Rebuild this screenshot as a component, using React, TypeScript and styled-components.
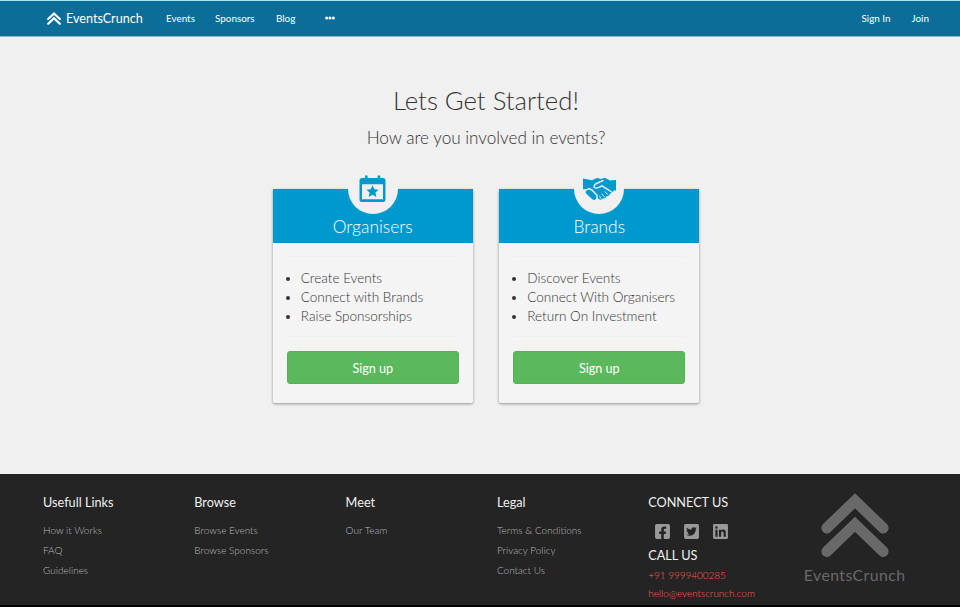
import React from 'react';
import styled, { createGlobalStyle } from 'styled-components';
import { FaFacebookSquare, FaTwitterSquare, FaLinkedin } from 'react-icons/fa';

const Global = createGlobalStyle`
  * { box-sizing: border-box; }
  body { margin: 0; background: #f0f0f0; font-family: Lato, "Liberation Sans", sans-serif; font-weight: 300; overflow: hidden; }
  h1, h2, h3, h4, p, ul { margin: 0; padding: 0; font-weight: inherit; }
  a { color: inherit; text-decoration: none; }
`;

const Page = styled.div`
  width: 960px;
  height: 607px;
  display: flex;
  flex-direction: column;
`;

const NavBar = styled.nav`
  height: 37px;
  flex: none;
  display: flex;
  align-items: center;
  padding: 0 31px 1px 47px;
  background: #0b6d98;
  border-top: 1px solid #a5e6f5;
  border-bottom: 1px solid #8fb9cb;
  color: #fff;
  font-size: 9.9px;
  font-weight: 400;
  white-space: nowrap;
`;

const Brand = styled.a`
  display: flex;
  align-items: center;
  gap: 5px;
  width: 119px;
  font-size: 12.6px;
  line-height: 17px;
  padding-top: 1px;
`;

const NavLink = styled.a<{ $width?: number }>`
  width: ${({ $width }) => ($width ? `${$width}px` : 'auto')};
  line-height: 14px;
`;

const Spacer = styled.div`
  flex: 1;
`;

const Main = styled.main`
  height: 437px;
  flex: none;
  display: flex;
  flex-direction: column;
  align-items: center;
  padding: 46px 0 0 12px;
`;

const Title = styled.h1`
  font-size: 25.7px;
  line-height: 34px;
  color: #333;
`;

const Subtitle = styled.h2`
  margin-top: 10px;
  font-size: 17.15px;
  line-height: 22px;
  color: #333;
`;

const Cards = styled.div`
  display: flex;
  gap: 26.5px;
  margin-top: 40px;
`;

const Card = styled.section`
  width: 200px;
  height: 214px;
  background: #f4f4f4;
  border-radius: 2px;
  box-shadow: 0 1px 3px rgba(0, 0, 0, 0.4);
`;

const CardHead = styled.header`
  height: 54px;
  display: flex;
  flex-direction: column;
  align-items: center;
  background: #0099cd;
  color: #fff;
`;

const Disc = styled.div`
  flex: none;
  width: 50px;
  height: 50px;
  margin-top: -25px;
  border-radius: 50%;
  display: flex;
  align-items: center;
  justify-content: center;
  background: #f0f0f0;
`;

const CardTitle = styled.h3`
  margin-top: 2px;
  font-size: 17.4px;
  line-height: 22px;
  font-weight: 300;
`;

const CardBody = styled.div`
  padding: 13px 14px;
`;

const Perks = styled.ul`
  height: 81px;
  padding: 12px 0 0 14px;
  border-top: 1px solid #efefef;
  border-bottom: 1px solid #efefef;
  font-size: 13.55px;
  line-height: 19.2px;
  color: #333;
  white-space: nowrap;
`;

const SignUp = styled.button`
  display: block;
  width: 172px;
  height: 33px;
  margin-top: 14px;
  padding: 2px 0 0;
  border: 1px solid #54b254;
  border-radius: 3px;
  background: #5cb85c;
  color: #fff;
  font: 400 12.6px/29px Lato, sans-serif;
`;

const Footer = styled.footer`
  height: 133px;
  flex: none;
  display: grid;
  grid-template-columns: 151.3px 151.3px 151.3px 151.3px 150px 1fr;
  padding: 18px 0 0 43px;
  background: #242424;
  border-bottom: 2px solid #000;
  white-space: nowrap;
`;

const Heading = styled.h4`
  font-size: 12.7px;
  line-height: 20px;
  font-weight: 400;
  color: #f0f0f0;
`;

const Links = styled.div`
  display: flex;
  flex-direction: column;
  margin-top: 8px;
  font-size: 10px;
  line-height: 20px;
  color: #b8b8b8;
`;

const Socials = styled.div`
  display: flex;
  gap: 12px;
  margin: 11px 0 5px 6px;
  height: 17px;
  font-size: 17px;
  color: #999;
`;

const Contacts = styled.div`
  display: flex;
  flex-direction: column;
  padding-top: 1px;
  font-size: 9.95px;
  line-height: 18px;
  color: #ff5a4c;
`;

const FooterBrand = styled.div`
  display: flex;
  flex-direction: column;
  align-items: center;
  gap: 8px;
  width: 103px;
  margin: 1px 0 0 5px;
  font-size: 15.8px;
  letter-spacing: 0.45px;
  line-height: 18px;
  font-weight: 400;
  color: #696969;
`;

const Chevrons = ({ width, height }: { width: number; height: number }) => (
  <svg width={width} height={height} viewBox="0 0 68 65" preserveAspectRatio="none" fill="none" stroke="currentColor" strokeWidth="10.8" strokeLinecap="round">
    <path d="M5.8 35L34 7.8L62.2 35" />
    <path d="M5.8 58.5L34 31.3L62.2 58.5" />
  </svg>
);

const CalendarIcon = () => (
  <svg width="28" height="28" viewBox="0 0 28 28" fill="#0099cd">
    <path fillRule="evenodd" d="M6 .8q1.3-1.2 2.600 0V3h10V.8q1.300-1.200 2.600 0V3H24q2.500 0 2.500 2.500v19q0 2.500-2.500 2.500H3q-2.500 0-2.500-2.500v-19Q.5 3 3 3h3zM3 9.300v15h21v-15z" />
    <path d="M13.500 10.300l1.800 3.900 4.300.5-3.200 2.900.9 4.300-3.800-2.200-3.800 2.200.9-4.300-3.200-2.900 4.300-.5z" />
  </svg>
);

const HandshakeIcon = () => (
  <svg width="33" height="24" viewBox="0 0 33 23" fill="#0099cd">
    <path d="M0 1L9 2.700L14 .6L18 1.500L22 .3L27 3L33 2.500V13H30.500Q30 16 27 16Q26.500 19 23.500 18.700Q22.500 21.500 20 21Q18 23 16 21.500L14 20Q12 24 9 21.500L3.500 16.500Q1.500 14.500 4 12H0Z" />
    <g fill="none" stroke="#f0f0f0" strokeWidth="1.400" strokeLinecap="round" strokeLinejoin="round">
      <path d="M20 3L12.500 6.500Q9.500 9.500 12.500 10.600Q14.500 10.800 19 8.300L29.500 15" />
      <path d="M-.5 12.800L3 12.600L6 11L9 12.500L14 17.800V20.500" />
      <path d="M22 14.300L25 17M19 16.500L21.500 19.500M16.500 18.500L18 21" strokeWidth="0.900" />
    </g>
  </svg>
);

const cards = [
  { title: 'Organisers', icon: <CalendarIcon />, perks: ['Create Events', 'Connect with Brands', 'Raise Sponsorships'] },
  { title: 'Brands', icon: <HandshakeIcon />, perks: ['Discover Events', 'Connect With Organisers', 'Return On Investment'] },
];

const columns = [
  { title: 'Usefull Links', links: ['How it Works', 'FAQ', 'Guidelines'] },
  { title: 'Browse', links: ['Browse Events', 'Browse Sponsors'] },
  { title: 'Meet', links: ['Our Team'] },
  { title: 'Legal', links: ['Terms & Conditions', 'Privacy Policy', 'Contact Us'] },
];

export default function App() {
  return (
    <Page>
      <Global />
      <NavBar>
        <Brand href="#"><Chevrons width={14} height={13} />EventsCrunch</Brand>
        <NavLink href="#" $width={49}>Events</NavLink>
        <NavLink href="#" $width={61}>Sponsors</NavLink>
        <NavLink href="#" $width={49}>Blog</NavLink>
        <svg width="10" height="4" viewBox="0 0 10 4" fill="currentColor">
          <circle cx="1.6" cy="2" r="1.5" /><circle cx="5" cy="2" r="1.5" /><circle cx="8.4" cy="2" r="1.5" />
        </svg>
        <Spacer />
        <NavLink href="#" $width={50}>Sign In</NavLink>
        <NavLink href="#">Join</NavLink>
      </NavBar>
      <Main>
        <Title>Lets Get Started!</Title>
        <Subtitle>How are you involved in events?</Subtitle>
        <Cards>
          {cards.map((c) => (
            <Card key={c.title}>
              <CardHead>
                <Disc>{c.icon}</Disc>
                <CardTitle>{c.title}</CardTitle>
              </CardHead>
              <CardBody>
                <Perks>{c.perks.map((p) => <li key={p}>{p}</li>)}</Perks>
                <SignUp>Sign up</SignUp>
              </CardBody>
            </Card>
          ))}
        </Cards>
      </Main>
      <Footer>
        {columns.map((c) => (
          <div key={c.title}>
            <Heading>{c.title}</Heading>
            <Links>{c.links.map((l) => <a href="#" key={l}>{l}</a>)}</Links>
          </div>
        ))}
        <div>
          <Heading>CONNECT US</Heading>
          <Socials><FaFacebookSquare /><FaTwitterSquare /><FaLinkedin /></Socials>
          <Heading>CALL US</Heading>
          <Contacts>
            <a href="#">+91 9999400285</a>
            <a href="#">hello@eventscrunch.com</a>
          </Contacts>
        </div>
        <FooterBrand><Chevrons width={68} height={65} />EventsCrunch</FooterBrand>
      </Footer>
    </Page>
  );
}
